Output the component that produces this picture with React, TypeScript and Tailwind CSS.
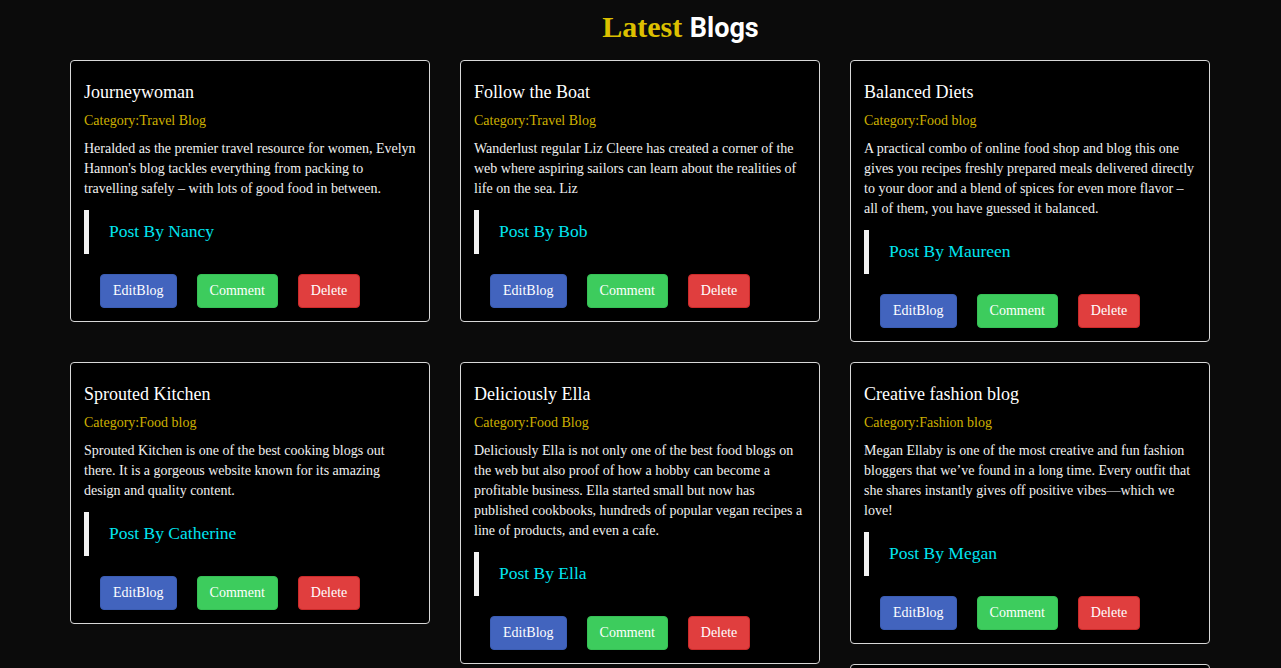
import React from "react";

type Blog = { title: string; category: string; body: string; author: string };

const blogs: Blog[] = [
  {
    title: "Journeywoman",
    category: "Travel Blog",
    body: "Heralded as the premier travel resource for women, Evelyn Hannon's blog tackles everything from packing to travelling safely – with lots of good food in between.",
    author: "Nancy",
  },
  {
    title: "Follow the Boat",
    category: "Travel Blog",
    body: "Wanderlust regular Liz Cleere has created a corner of the web where aspiring sailors can learn about the realities of life on the sea. Liz",
    author: "Bob",
  },
  {
    title: "Balanced Diets",
    category: "Food blog",
    body: "A practical combo of online food shop and blog this one gives you recipes freshly prepared meals delivered directly to your door and a blend of spices for even more flavor – all of them, you have guessed it balanced.",
    author: "Maureen",
  },
  {
    title: "Sprouted Kitchen",
    category: "Food blog",
    body: "Sprouted Kitchen is one of the best cooking blogs out there. It is a gorgeous website known for its amazing design and quality content.",
    author: "Catherine",
  },
  {
    title: "Deliciously Ella",
    category: "Food Blog",
    body: "Deliciously Ella is not only one of the best food blogs on the web but also proof of how a hobby can become a profitable business. Ella started small but now has published cookbooks, hundreds of popular vegan recipes a line of products, and even a cafe.",
    author: "Ella",
  },
  {
    title: "Creative fashion blog",
    category: "Fashion blog",
    body: "Megan Ellaby is one of the most creative and fun fashion bloggers that we’ve found in a long time. Every outfit that she shares instantly gives off positive vibes—which we love!",
    author: "Megan",
  },
  {
    title: "Style Notes",
    category: "Fashion blog",
    body: "A daily journal of outfits, trends and practical styling advice for every season and every budget.",
    author: "Sarah",
  },
];

function Card({ b }: { b: Blog }) {
  return (
    <div className="w-[360px] bg-black border border-[#d8d8d8] rounded-[4px] px-[13px] pt-[20px] pb-[13px]">
      <h4 className="text-[18px] leading-[22px] text-white">{b.title}</h4>
      <p className="mt-[8px] text-[14px] leading-[20px] text-[#cdb000]">
        Category:{b.category}
      </p>
      <p className="mt-[8px] text-[14px] leading-[20px] text-[#f0f0f0]">{b.body}</p>
      <div className="mt-[11px] border-l-[5px] border-[#f2f2f2] pl-[20px] pt-[9px] pb-[10px] text-[17.5px] leading-[25px] text-[#00e5f0]">
        Post By {b.author}
      </div>
      <div className="mt-[20px] ml-[16px] flex gap-[20px]">
        <button className="h-[34px] px-[12px] rounded-[4px] border border-[#3b5db3] bg-[#4264be] text-[14px] leading-[20px] text-white">
          EditBlog
        </button>
        <button className="h-[34px] px-[12px] rounded-[4px] border border-[#36c055] bg-[#3dcc5d] text-[14px] leading-[20px] text-white">
          Comment
        </button>
        <button className="h-[34px] px-[12px] rounded-[4px] border border-[#cc2a2a] bg-[#e03e3e] text-[14px] leading-[20px] text-white">
          Delete
        </button>
      </div>
    </div>
  );
}

export default function App() {
  return (
    <div
      className="min-h-screen bg-[#0b0b0b] pb-10"
      style={{ fontFamily: '"Liberation Serif", "Times New Roman", serif' }}
    >
      <h1 className="pt-[9px] pl-[80px] text-center text-[30px] leading-[36px] font-bold">
        <span className="text-[#dcc000]" style={{ fontFamily: '"Liberation Serif", serif' }}>
          Latest
        </span>{" "}
        <span
          className="text-white text-[27px]"
          style={{ fontFamily: 'Roboto, "Liberation Sans", sans-serif' }}
        >
          Blogs
        </span>
      </h1>
      <div className="mt-[14px] w-[1140px] ml-[70px] flex flex-col gap-[20px]">
        <div className="flex gap-[30px] items-start">
          <Card b={blogs[0]} />
          <Card b={blogs[1]} />
          <Card b={blogs[2]} />
        </div>
        <div className="flex gap-[30px] items-start">
          <Card b={blogs[3]} />
          <Card b={blogs[4]} />
          <div className="flex flex-col gap-[20px]">
            <Card b={blogs[5]} />
            <Card b={blogs[6]} />
          </div>
        </div>
      </div>
    </div>
  );
}
